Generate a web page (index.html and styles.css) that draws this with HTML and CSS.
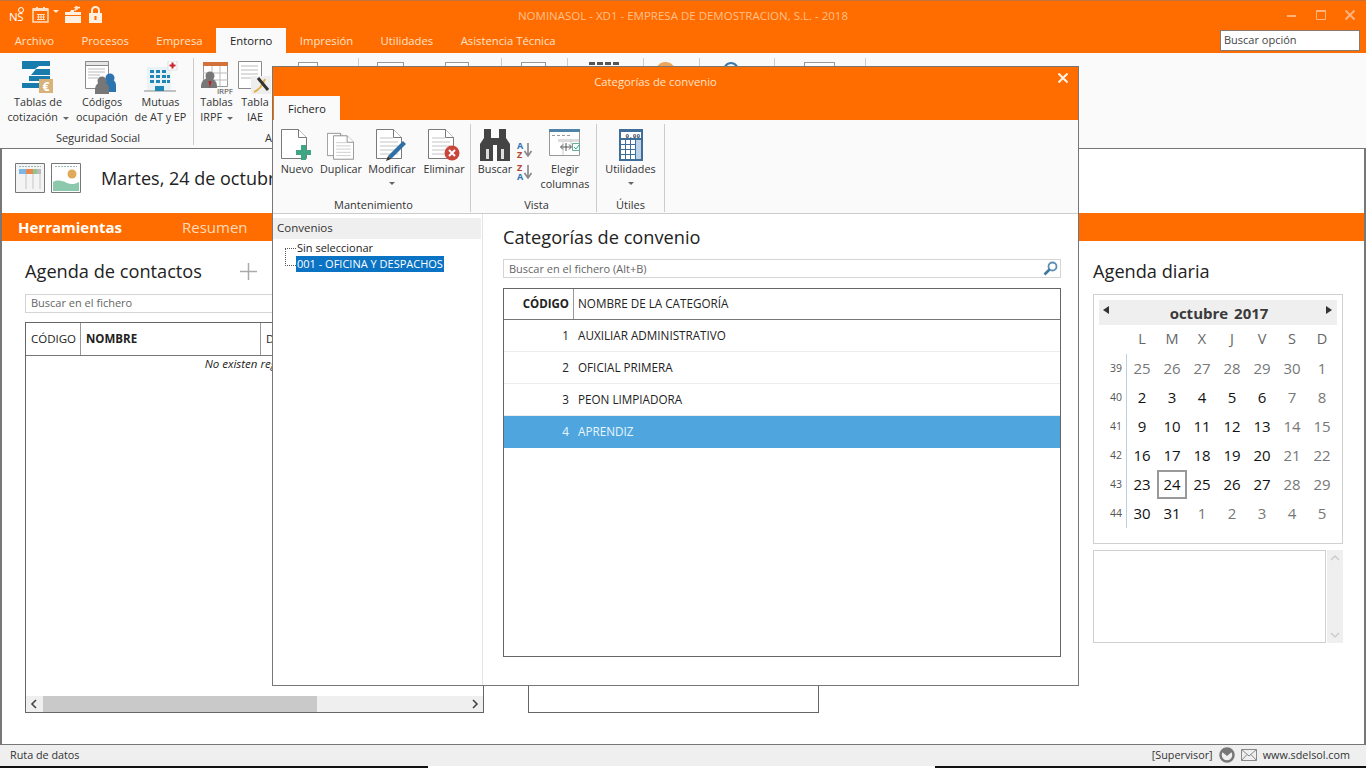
FILE: index.html
```html
<!DOCTYPE html>
<html lang="es">
<head>
<meta charset="utf-8">
<title>NOMINASOL</title>
<link rel="stylesheet" href="styles.css">
</head>
<body>
<svg class="defs" width="0" height="0">
  <defs>
    <symbol id="page" viewBox="0 0 26 30">
      <path d="M.5.500h17l8 8v21H.5z" fill="#fff" stroke="#7a7a7a"/>
      <path d="M17.500.500v8h8" fill="#fff" stroke="#7a7a7a"/>
    </symbol>
    <symbol id="lines" viewBox="0 0 26 30">
      <path d="M4 9h13M4 13h18M4 17h18M4 21h18M4 25h18" stroke="#c4c4c4" fill="none"/>
    </symbol>
  </defs>
</svg>

<div class="app">
  <header class="titlebar">
    <div class="qat">
      <span class="ns">NS</span>
      <svg class="qi" width="17" height="16" viewBox="0 0 17 16"><path d="M1 2h15v13H1z" fill="none" stroke="#ffe0c4" stroke-width="1.500"/><path d="M1 1h15v3H1zM4 0h2v2H4zM11 0h2v2h-2z" fill="#ffe0c4"/><path d="M5 7.500h8M5 10h8M5 12.500h8M6.500 7v6M9 7v6M11.500 7v6" stroke="#ffe0c4"/></svg>
      <i class="caret light"></i>
      <svg class="qi folder" width="17" height="17" viewBox="0 0 17 17"><path d="M0 6h5l1-2h3v2h7v11H0z" fill="#fff0e2"/><path d="M0 9.500h16" stroke="#ff6d00"/><path d="M10 5c0-2 1-3.500 5-3.500M12.500 0l-2.500 1.500 2.500 2" stroke="#fff0e2" stroke-width="1.300" fill="none"/></svg>
      <svg class="qi" width="13" height="17" viewBox="0 0 13 17"><path d="M3 7V4.500a3.500 3.500 0 0 1 7 0V7" fill="none" stroke="#fff0e2" stroke-width="2"/><path d="M0 7h13v10H0z" fill="#fff0e2"/><path d="M6.500 10v4" stroke="#ff6d00" stroke-width="2"/></svg>
    </div>
    <div class="apptitle">NOMINASOL - XD1 - EMPRESA DE DEMOSTRACION, S.L. - 2018</div>
    <div class="winbtns">
      <svg width="12" height="12" viewBox="0 0 12 12"><path d="M1 7h9" stroke="#ffb27a" stroke-width="2"/></svg>
      <svg width="12" height="12" viewBox="0 0 12 12"><path d="M1.500 1.500h9v9h-9z" fill="none" stroke="#ffb27a"/><path d="M1 2h10" stroke="#ffb27a" stroke-width="2"/></svg>
      <svg width="12" height="12" viewBox="0 0 12 12"><path d="M1.500 1.500l9 9M10.500 1.500l-9 9" stroke="#ffb27a" stroke-width="2"/></svg>
    </div>
  </header>

  <nav class="tabs">
    <span class="tab">Archivo</span>
    <span class="tab">Procesos</span>
    <span class="tab">Empresa</span>
    <span class="tab active">Entorno</span>
    <span class="tab">Impresión</span>
    <span class="tab">Utilidades</span>
    <span class="tab">Asistencia Técnica</span>
    <span class="findopt">Buscar opción</span>
  </nav>

  <section class="ribbon">
    <div class="rgroup g-social">
      <div class="rbtns">
        <div class="rbtn w-a">
          <svg width="34" height="34" viewBox="0 0 34 34"><path d="M1 0h28v5H18l-4 3h15v6H10l5-6H1z" fill="#1a7bad"/><path d="M8 15h21v5H8zM1 22h18v5H1z" fill="#1a7bad"/><path d="M18 18h14v14H18z" fill="#d9b27a"/><text x="25" y="30" class="euro">€</text></svg>
          <span class="lbl">Tablas de<br>cotización <i class="caret"></i></span>
        </div>
        <div class="rbtn w-b">
          <svg width="34" height="34" viewBox="0 0 34 34"><path d="M.5.500h23v27H.5z" fill="#fff" stroke="#8a8a8a"/><path d="M.5.500h23v4H.5z" fill="#e5e5e5" stroke="#8a8a8a"/><path d="M3 8h17M3 11h17M3 14h12M3 17h10" stroke="#bbb"/><circle cx="25" cy="17" r="4.500" fill="#2e75b0"/><path d="M19 31v-7a6 6 0 0 1 12 0v7z" fill="#2e75b0"/><circle cx="17" cy="20" r="4.500" fill="#777"/><path d="M10 33v-5a7 7 0 0 1 14 0v5z" fill="#777"/></svg>
          <span class="lbl">Códigos<br>ocupación</span>
        </div>
        <div class="rbtn w-c">
          <svg width="34" height="34" viewBox="0 0 34 34"><path d="M3 6h24v24H3z" fill="#e8f2f7"/><path d="M0 30h32" stroke="#8a8a8a"/><path d="M6 9h4v3H6zM12 9h4v3h-4zM18 9h4v3h-4zM6 14h4v3H6zM12 14h4v3h-4zM18 14h4v3h-4zM6 19h4v3H6zM12 19h4v3h-4zM18 19h4v3h-4zM23 14h3v3h-3zM23 19h3v3h-3zM11 25h9v5h-9z" fill="#1f86b5"/><path d="M24 0h9v9h-9z" fill="#fff" stroke="#ddd"/><path d="M28.500 1.500v6M25.500 4.500h6" stroke="#c8202c" stroke-width="2"/></svg>
          <span class="lbl">Mutuas<br>de AT y EP</span>
        </div>
      </div>
      <div class="gtitle social-title">Seguridad Social</div>
    </div>
    <div class="rgroup g-aeat">
      <div class="rbtns">
        <div class="rbtn w-d">
          <svg width="34" height="34" viewBox="0 0 34 34"><path d="M3.500 1.500h24v24h-24z" fill="#fff" stroke="#999"/><path d="M3 1h25v4H3z" fill="#d4713a"/><path d="M3 12h25M3 19h25M12 5v20M20 5v20" stroke="#bbb"/><circle cx="10" cy="15" r="4.500" fill="#777"/><path d="M1 27v-2a8 8 0 0 1 16 0v2z" fill="#777"/><path d="M8.500 20h3l-1.500 7z" fill="#b22"/><text x="33" y="33" class="irpf">IRPF</text></svg>
          <span class="lbl">Tablas<br>IRPF <i class="caret"></i></span>
        </div>
        <div class="rbtn w-e">
          <svg width="34" height="34" viewBox="0 0 34 34"><path d="M.5.500h23v27H.5z" fill="#fff" stroke="#8a8a8a"/><path d="M3 5h17M3 9h17M3 13h17M3 17h12" stroke="#bbb"/><path d="M13 15h20v18H13z" fill="#eee"/><path d="M16 31c5-2 9-8 11-13" stroke="#e0b040" stroke-width="2" fill="none"/><path d="M20 17l10 12" stroke="#333" stroke-width="3"/></svg>
          <span class="lbl">Tabla<br>IAE</span>
        </div>
        <i class="peek p-doc p-a"></i>
      </div>
      <div class="gtitle aeat-title">AEAT</div>
    </div>
    <div class="rgroup g3"><i class="peek p-doc p-b"></i><i class="peek p-doc p-c"></i></div>
    <div class="rgroup g4"><i class="peek p-doc p-d"></i></div>
    <div class="rgroup g5"><i class="peek p-dark"></i></div>
    <div class="rgroup g6"><i class="peek p-orange"></i></div>
    <div class="rgroup g7"><i class="peek p-globe"></i></div>
    <div class="rgroup g8"><i class="peek p-doc p-e"></i></div>
  </section>

  <main class="main">
    <div class="dayhead">
      <svg class="dayicon" width="31" height="30" viewBox="0 0 31 30"><path d="M.5.500h29v29H.5z" fill="#f4f4f4" stroke="#777"/><path d="M4 6h7v5H4z" fill="#7db7e3"/><path d="M11 6h7v5h-7z" fill="#e8884f"/><path d="M18 6h4v5h-4z" fill="#8fc48f"/><path d="M22 6h4v5h-4z" fill="#bbb"/><path d="M4 3.500h22" stroke="#9bb" stroke-dasharray="2 1"/><path d="M11 11v15M18 11v15M25 11v15" stroke="#ddd" stroke-width="2"/></svg>
      <svg class="dayicon" width="31" height="30" viewBox="0 0 31 30"><path d="M.5.500h29v29H.5z" fill="#fff" stroke="#777"/><path d="M2 19c5-3 10-1 14 1s9 1 12-1v9H2z" fill="#8cc8ab"/><circle cx="21" cy="11" r="4.500" fill="#e0a95c"/><path d="M4 3.500h22" stroke="#9bb" stroke-dasharray="2 1"/></svg>
      <h1 class="today">Martes, 24 de octubre de 2017</h1>
    </div>
    <div class="navbar">
      <span class="nav-on">Herramientas</span>
      <span class="nav-off">Resumen</span>
    </div>
    <div class="panels">
      <section class="col-contacts">
        <div class="paneltitle">
          <h2>Agenda de contactos</h2>
          <svg class="plus" width="17" height="17" viewBox="0 0 17 17"><path d="M8.500 0v17M0 8.500h17" stroke="#aaa" stroke-width="1.500"/></svg>
        </div>
        <div class="search contacts-search">Buscar en el fichero</div>
        <div class="grid">
          <div class="ghead">
            <span class="c-cod">CÓDIGO</span>
            <span class="c-nom">NOMBRE</span>
            <span class="c-dir">DOMICILIO</span>
          </div>
          <div class="gbody"><em>No existen registros</em></div>
          <div class="hscroll">
            <svg width="17" height="16" viewBox="0 0 17 16"><path d="M10 4 6 8l4 4" stroke="#444" stroke-width="1.600" fill="none"/></svg>
            <div class="thumb"></div>
            <svg class="hs-r" width="17" height="16" viewBox="0 0 17 16"><path d="M7 4l4 4-4 4" stroke="#444" stroke-width="1.600" fill="none"/></svg>
          </div>
        </div>
      </section>
      <section class="col-mid"></section>
      <section class="col-day">
        <div class="paneltitle"><h2>Agenda diaria</h2></div>
        <div class="calendar">
          <div class="calhead">
            <i class="arrow left"></i>
            <span>octubre 2017</span>
            <i class="arrow right"></i>
          </div>
          <div class="calgrid">
            <span></span><b>L</b><b>M</b><b>X</b><b>J</b><b>V</b><b>S</b><b>D</b>
            <u>39</u><s>25</s><s>26</s><s>27</s><s>28</s><s>29</s><s>30</s><s>1</s>
            <u>40</u><a>2</a><a>3</a><a>4</a><a>5</a><a>6</a><s>7</s><s>8</s>
            <u>41</u><a>9</a><a>10</a><a>11</a><a>12</a><a>13</a><s>14</s><s>15</s>
            <u>42</u><a>16</a><a>17</a><a>18</a><a>19</a><a>20</a><s>21</s><s>22</s>
            <u>43</u><a>23</a><a class="cur">24</a><a>25</a><a>26</a><a>27</a><s>28</s><s>29</s>
            <u>44</u><a>30</a><a>31</a><s>1</s><s>2</s><s>3</s><s>4</s><s>5</s>
          </div>
        </div>
        <div class="notes">
          <div class="notebox"></div>
          <div class="vscroll">
            <svg width="16" height="16" viewBox="0 0 16 16"><path d="M4 10l4-4 4 4" stroke="#ccc" stroke-width="1.500" fill="none"/></svg>
            <svg width="16" height="16" viewBox="0 0 16 16"><path d="M4 6l4 4 4-4" stroke="#ccc" stroke-width="1.500" fill="none"/></svg>
          </div>
        </div>
      </section>
    </div>
  </main>

  <footer class="status">
    <span>Ruta de datos</span>
    <span class="st-right">
      <span>[Supervisor]</span>
      <svg width="16" height="16" viewBox="0 0 16 16"><circle cx="8" cy="8" r="6.500" fill="none" stroke="#777" stroke-width="2.500"/><path d="M2 4l6 5 6-5-3-3H5z" fill="#777"/></svg>
      <svg width="16" height="12" viewBox="0 0 16 12"><path d="M.5.500h15v11H.5zM.5.500 8 7l7.500-6.500M.5 11.500 6 5.500M15.500 11.500 10 5.500" fill="none" stroke="#888"/></svg>
      <span>www.sdelsol.com</span>
    </span>
  </footer>
  <div class="taskstrip"><div class="stripgap"></div></div>
</div>

<div class="modal">
  <div class="mhead">
    <div class="mtitle">Categorías de convenio</div>
    <svg class="mclose" width="10" height="10" viewBox="0 0 10 10"><path d="M.5.500l9 9M9.500.500l-9 9" stroke="#fff5e8" stroke-width="2"/></svg>
    <span class="mtab">Fichero</span>
  </div>
  <div class="mribbon">
    <div class="mgroup mg1">
      <div class="rbtns">
        <div class="mbtn m-n">
          <svg width="32" height="32" viewBox="0 0 32 32"><use href="#page" width="26" height="30"/><path d="M20 16h5v5h5v5h-5v5h-5v-5h-5v-5h5z" fill="#3fa583"/></svg>
          <span class="lbl">Nuevo</span>
        </div>
        <div class="mbtn m-d">
          <svg width="32" height="32" viewBox="0 0 32 32"><g transform="translate(2 3)"><use href="#page" width="20" height="25"/></g><g transform="translate(8 6)"><use href="#page" width="21" height="25"/><use href="#lines" width="21" height="25"/></g></svg>
          <span class="lbl">Duplicar</span>
        </div>
        <div class="mbtn m-m">
          <svg width="32" height="32" viewBox="0 0 32 32"><use href="#page" width="26" height="30"/><use href="#lines" width="26" height="30"/><path d="M12 27 27 12l3 3-15 15z" fill="#2e6fa8"/><path d="M10 32l2-5 3 3z" fill="#333"/></svg>
          <span class="lbl">Modificar</span>
          <i class="caret"></i>
        </div>
        <div class="mbtn m-e">
          <svg width="32" height="32" viewBox="0 0 32 32"><use href="#page" width="26" height="30"/><use href="#lines" width="26" height="30"/><circle cx="24" cy="24" r="7.500" fill="#c9463b"/><path d="M21 21l6 6M27 21l-6 6" stroke="#fff" stroke-width="2"/></svg>
          <span class="lbl">Eliminar</span>
        </div>
      </div>
      <div class="gtitle">Mantenimiento</div>
    </div>
    <div class="mgroup mg2">
      <div class="rbtns">
        <div class="mbtn m-s">
          <svg width="32" height="32" viewBox="0 0 32 32"><path d="M5 0h7v9h8V0h7v9l4 6v17H18V16h-4v16H1V15l4-6z" fill="#444"/><path d="M7 20h3v10H7zM22 20h3v10h-3z" fill="#ddd"/></svg>
          <span class="lbl">Buscar</span>
        </div>
        <div class="sorts">
          <div class="sort"><span class="st-a">A<br><em>Z</em></span><svg width="8" height="14" viewBox="0 0 8 14"><path d="M4 0v12M.5 8 4 13l3.500-5" stroke="#888" stroke-width="1.600" fill="none"/></svg></div>
          <div class="sort"><span class="st-a"><em>Z</em><br>A</span><svg width="8" height="14" viewBox="0 0 8 14"><path d="M4 0v12M.5 8 4 13l3.500-5" stroke="#888" stroke-width="1.600" fill="none"/></svg></div>
        </div>
        <div class="mbtn m-c">
          <svg width="32" height="28" viewBox="0 0 32 28"><path d="M.5.500h30v26H.5z" fill="#fff" stroke="#999"/><path d="M0 0h31v3H0z" fill="#4f83a8"/><path d="M3 6.500h3M8 6.500h3M13 6.500h3M18 6.500h3" stroke="#999"/><path d="M9 10h21v3H9z" fill="#ddd"/><path d="M14 13v13M22 10v7" stroke="#ccc"/><path d="M12 18h10M14 15.500 11.500 18l2.500 2.500M20 15.500l2.500 2.500-2.500 2.500M17 14v8" stroke="#555" fill="none"/><path d="M23.500 14.500h7v7h-7z" fill="#fff" stroke="#6a9"/><path d="M25 18l2 2 3-4" stroke="#3a8" fill="none"/></svg>
          <span class="lbl">Elegir<br>columnas</span>
        </div>
      </div>
      <div class="gtitle">Vista</div>
    </div>
    <div class="mgroup mg3">
      <div class="rbtns">
        <div class="mbtn m-u">
          <svg width="24" height="32" viewBox="0 0 24 32"><path d="M0 0h24v32H0z" fill="#3f6f99"/><path d="M2 3h20v6H2z" fill="#fff"/><text x="21" y="8.500" class="calc">0,00</text><path d="M2 11h4v4H2zM7 11h4v4H7zM12 11h4v4h-4zM2 16h4v4H2zM7 16h4v4H7zM12 16h4v4h-4zM2 21h4v4H2zM7 21h4v4H7zM12 21h4v4h-4zM2 26h4v4H2zM7 26h4v4H7zM12 26h4v4h-4z" fill="#fff"/><path d="M17 11h5v19h-5z" fill="#bcd3ea"/></svg>
          <span class="lbl">Utilidades</span>
          <i class="caret"></i>
        </div>
      </div>
      <div class="gtitle">Útiles</div>
    </div>
  </div>
  <div class="mbody">
    <aside class="tree">
      <div class="treehead">Convenios</div>
      <ul class="treelist">
        <li>Sin seleccionar</li>
        <li class="sel">001 - OFICINA Y DESPACHOS</li>
      </ul>
    </aside>
    <section class="mcontent">
      <h2>Categorías de convenio</h2>
      <div class="search msearch">
        <span>Buscar en el fichero (Alt+B)</span>
        <svg width="15" height="15" viewBox="0 0 15 15"><circle cx="9.500" cy="5.500" r="4" fill="#fff" stroke="#5a8fb5" stroke-width="1.800"/><path d="M6.500 8.500 1.500 13.500" stroke="#3f789f" stroke-width="2.600"/></svg>
      </div>
      <div class="cats">
        <div class="crow chead"><b>CÓDIGO</b><span>NOMBRE DE LA CATEGORÍA</span></div>
        <div class="crow"><b>1</b><span>AUXILIAR ADMINISTRATIVO</span></div>
        <div class="crow"><b>2</b><span>OFICIAL PRIMERA</span></div>
        <div class="crow"><b>3</b><span>PEON LIMPIADORA</span></div>
        <div class="crow picked"><b>4</b><span>APRENDIZ</span></div>
      </div>
    </section>
  </div>
</div>
</body>
</html>
```

FILE: styles.css
```css
* { box-sizing: border-box; }
html, body { margin: 0; padding: 0; width: 1366px; height: 768px; overflow: hidden; }
body { font-family: "Open Sans", "Noto Sans", sans-serif; font-size: 11.5px; color: #222; background: #fff; position: relative; }
.defs { position: absolute; }
h1, h2 { margin: 0; font-weight: 400; }
ul { list-style: none; margin: 0; padding: 0; }
.app { display: flex; flex-direction: column; height: 768px; }

.titlebar { height: 28px; flex: none; background: #ff6d00; border-top: 1px solid #c0743a; display: flex; align-items: center; position: relative; }
.qat { display: flex; align-items: center; padding-left: 9px; }
.ns { color: #fff; font-size: 11.500px; width: 23px; position: relative; padding-top: 3px; letter-spacing: -.5px; }
.ns::after { content: ""; position: absolute; left: 9px; top: 1px; width: 4px; height: 4px; border: 1px solid #fff; border-radius: 50%; }
.qi { flex: none; }
.folder { margin: 0 7px 0 6px; }
.apptitle { position: absolute; left: 0; right: 0; top: 7px; text-align: center; color: #ffc08c; font-size: 11.500px; }
.winbtns { margin-left: auto; display: flex; gap: 17px; padding-right: 10px; }

.caret { display: inline-block; width: 0; height: 0; border: 3px solid transparent; border-top: 3px solid #666; border-bottom: 0; vertical-align: middle; margin-left: 2px; }
.caret.light { border-top-color: #ffe9d6; margin: 0 0 6px 4px; }

.tabs { height: 25px; flex: none; background: #ff6d00; display: flex; align-items: stretch; padding-left: 1px; }
.tab { padding: 5px 13.700px 0; color: #ffe2c9; font-size: 11.300px; }
.tab.active { background: #fafafa; color: #222; }
.findopt { margin: 2px 6px 2px auto; width: 140px; background: #fff; border: 1px solid #8a7a70; color: #444; padding: 1px 3px; font-size: 11px; }

.ribbon { height: 95px; flex: none; background: #fafafa; display: flex; padding: 5px 0 3px 5px; }
.rgroup { display: flex; flex-direction: column; border-right: 1px solid #ccc; }
.g-social { width: 189px; }
.g-aeat { width: 165px; padding-left: 5px; }
.g3, .g4, .g5, .g6, .g7, .g8 { flex-direction: row; align-items: flex-start; }
.g3 { width: 143px; }
.g4 { width: 66px; }
.g5 { width: 76px; }
.g6 { width: 56px; }
.g7 { width: 75px; }
.g8 { width: 91px; }
.rbtns { display: flex; flex: 1; }
.rbtn { display: flex; flex-direction: column; align-items: center; text-align: center; padding-top: 3px; }
.rbtn svg { flex: none; }
.w-a { width: 66px; }
.w-b { width: 62px; }
.w-c { width: 55px; }
.w-d { width: 35px; }
.w-e { width: 42px; }
.lbl { line-height: 15px; white-space: nowrap; color: #333; font-size: 10.800px; }
.rbtn .lbl { margin-top: -1px; }
.gtitle { text-align: center; font-size: 11px; line-height: 15px; color: #333; }
.social-title { padding-right: 2px; }
.aeat-title { padding-left: 66px; text-align: left; }
.euro { font: 700 12px "Open Sans", sans-serif; fill: #fff; text-anchor: middle; }
.irpf { font: 400 8px "Open Sans", sans-serif; fill: #444; text-anchor: end; }
.calc { font: 700 6px "Liberation Mono", monospace; fill: #345; text-anchor: end; }
.peek { display: block; flex: none; height: 22px; margin-top: 4px; }
.p-doc { background: #fff; border: 1px solid #999; }
.p-a { width: 20px; margin-left: 22px; }
.p-b { width: 27px; margin-left: 18px; }
.p-c { width: 24px; margin-left: 41px; }
.p-d { width: 25px; margin-left: 19px; }
.p-e { width: 31px; margin-left: 29px; }
.p-dark { width: 30px; margin-left: 21px; border-top: 3px dashed #555; }
.p-orange { width: 21px; margin-left: 11px; border-radius: 50%; background: #eda55c; }
.p-globe { width: 18px; margin-left: 22px; border-radius: 50%; border: 2px solid #3f78a8; }

.main { flex: 1; min-height: 0; border: 1px solid #777; border-width: 1px 2px 1px 2px; display: flex; flex-direction: column; background: #fff; }
.dayhead { height: 64px; flex: none; display: flex; align-items: center; padding: 0 0 6px 13px; gap: 5px; }
.today { font-size: 18px; margin-left: 14px; color: #222; white-space: nowrap; }
.navbar { height: 28px; flex: none; background: #ff6d00; display: flex; align-items: center; padding-left: 16px; color: #fff; font-size: 15px; }
.nav-on { font-weight: 700; width: 164px; }
.nav-off { color: #ffd9ba; }
.panels { flex: 1; min-height: 0; display: flex; padding: 19px 0 31px 23px; }
.col-contacts { width: 459px; display: flex; flex-direction: column; }
.col-mid { width: 291px; margin: 81px 0 0 44px; border: 1px solid #666; }
.col-day { width: 250px; margin-left: 274px; }
.paneltitle { height: 23px; display: flex; align-items: center; margin-bottom: 11px; }
.paneltitle h2 { font-size: 18.200px; line-height: 23px; color: #222; }
.plus { margin-left: 38px; }
.search { border: 1px solid #d4d4d4; height: 19px; color: #666; font-size: 11px; line-height: 16px; padding-left: 5px; background: #fff; }
.grid { flex: 1; margin-top: 9px; border: 1px solid #666; display: flex; flex-direction: column; min-height: 0; }
.ghead { height: 33px; flex: none; display: flex; align-items: center; border-bottom: 1px solid #777; font-size: 11.500px; }
.ghead span { height: 100%; line-height: 32px; padding-left: 5px; white-space: nowrap; }
.c-cod { width: 55px; border-right: 1px solid #999; }
.c-nom { width: 180px; border-right: 1px solid #999; font-weight: 700; padding-left: 4px; }
.gbody { flex: 1; text-align: center; font-size: 11.500px; line-height: 15px; }
.hscroll { height: 16px; flex: none; background: #efefef; display: flex; align-items: center; }
.thumb { width: 274px; height: 16px; background: #c9c9c9; }
.hs-r { margin-left: auto; }

.calendar { height: 250px; border: 1px solid #d0d0d0; padding: 5px; }
.calhead { height: 25px; background: #efefef; display: flex; align-items: center; justify-content: center; font-weight: 700; font-size: 15px; color: #3a3a3a; position: relative; word-spacing: 2px; padding: 1px 0 0 2px; }
.arrow { position: absolute; top: 6px; width: 0; height: 0; border: 4px solid transparent; }
.arrow.left { left: 4px; border-right: 6px solid #333; border-left: 0; }
.arrow.right { right: 5px; border-left: 6px solid #333; border-right: 0; }
.calgrid { display: grid; grid-template-columns: 28px repeat(7, 30px); grid-auto-rows: 29px; font-size: 15px; text-align: center; line-height: 29px; }
.calgrid b { font-weight: 400; color: #666; font-size: 14.500px; line-height: 27px; }
.calgrid u { text-decoration: none; font-size: 10.500px; color: #555; text-align: right; padding-right: 4px; border-right: 1px solid #b9d0de; }
.calgrid span { height: 29px; }
.calgrid s { text-decoration: none; color: #777; }
.calgrid a { color: #111; }
.calgrid .cur { border: 2px solid #999; line-height: 25px; }
.notes { margin-top: 6px; height: 93px; display: flex; gap: 1px; }
.notebox { flex: 1; border: 1px solid #d0d0d0; }
.vscroll { width: 16px; background: #efefef; display: flex; flex-direction: column; justify-content: space-between; }

.status { height: 21px; flex: none; background: #efefef; display: flex; align-items: center; padding: 0 16px 2px 10px; font-size: 10.800px; color: #333; }
.st-right { margin-left: auto; display: flex; align-items: center; gap: 6px; }
.taskstrip { height: 2px; flex: none; background: #111; }
.stripgap { width: 507px; height: 2px; margin-left: 428px; background: #fff; }

.modal { position: absolute; left: 272px; top: 66px; width: 807px; height: 620px; background: #fff; border: 1px solid #777; display: flex; flex-direction: column; }
.mhead { height: 53px; flex: none; background: #ff6d00; position: relative; }
.mtitle { text-align: center; color: #ffe2c9; padding: 7px 40px 0 0; font-size: 11.300px; }
.mclose { position: absolute; right: 10px; top: 6px; }
.mtab { position: absolute; left: 1px; bottom: 0; width: 66px; height: 24px; background: #fafafa; text-align: center; line-height: 25px; font-size: 11px; color: #222; }
.mribbon { height: 94px; flex: none; background: #fafafa; border-bottom: 1px solid #ccc; display: flex; padding-top: 4px; }
.mgroup { display: flex; flex-direction: column; border-right: 1px solid #ccc; height: 88px; }
.mgroup .gtitle { margin-top: auto; }
.mg1 { width: 198px; padding-left: 4px; }
.mg2 { width: 126px; padding-left: 6px; }
.mg3 { width: 68px; }
.mbtn { display: flex; flex-direction: column; align-items: center; text-align: center; padding-top: 5px; }
.mbtn > .caret { margin: 6px 0 0; }
.m-n { width: 40px; }
.m-d { width: 48px; }
.m-m { width: 54px; }
.m-e { width: 50px; }
.m-s { width: 36px; }
.m-c { width: 48px; margin-left: 4px; }
.m-c svg { margin-bottom: 4px; }
.m-u { width: 67px; }
.sorts { width: 24px; padding: 17px 0 0 4px; display: flex; flex-direction: column; gap: 4px; }
.sort { display: flex; align-items: center; height: 18px; gap: 1px; }
.st-a { font-size: 9px; line-height: 9px; font-weight: 700; color: #2e75b0; }
.st-a em { color: #b04a32; font-style: normal; }

.mbody { flex: 1; display: flex; min-height: 0; }
.tree { width: 210px; flex: none; border-right: 1px solid #e4e4e4; padding-top: 4px; }
.treehead { height: 21px; width: 208px; background: #efefef; line-height: 20px; padding-left: 4px; color: #333; }
.treelist { padding: 1px 0 0 23px; position: relative; }
.treelist::before { content: ""; position: absolute; left: 12px; top: 9px; width: 10px; height: 16px; border-left: 1px dotted #555; border-top: 1px dotted #555; border-bottom: 1px dotted #555; }
.treelist li { height: 16px; line-height: 15px; padding-left: 1px; white-space: nowrap; font-size: 11px; }
.treelist .sel { background: #0a73c4; color: #fff; width: 148px; }
.mcontent { flex: 1; padding: 11px 17px 28px 20px; display: flex; flex-direction: column; }
.mcontent h2 { font-size: 18.200px; line-height: 24px; color: #222; margin-bottom: 10px; }
.msearch { display: flex; align-items: center; justify-content: space-between; padding-right: 2px; flex: none; }
.cats { flex: 1; margin-top: 10px; border: 1px solid #666; }
.crow { display: flex; height: 32px; border-bottom: 1px solid #ececec; line-height: 31px; font-size: 11.700px; }
.crow b { width: 69px; text-align: right; font-weight: 400; padding-right: 4px; flex: none; }
.crow span { padding-left: 5px; }
.chead { height: 31px; border-bottom-color: #777; line-height: 29px; }
.chead b { width: 70px; font-weight: 700; border-right: 1px solid #999; font-size: 11.500px; }
.chead span { padding-left: 4px; }
.picked { background: #4fa6de; color: #e8f5ff; border-bottom: 0; }
```
